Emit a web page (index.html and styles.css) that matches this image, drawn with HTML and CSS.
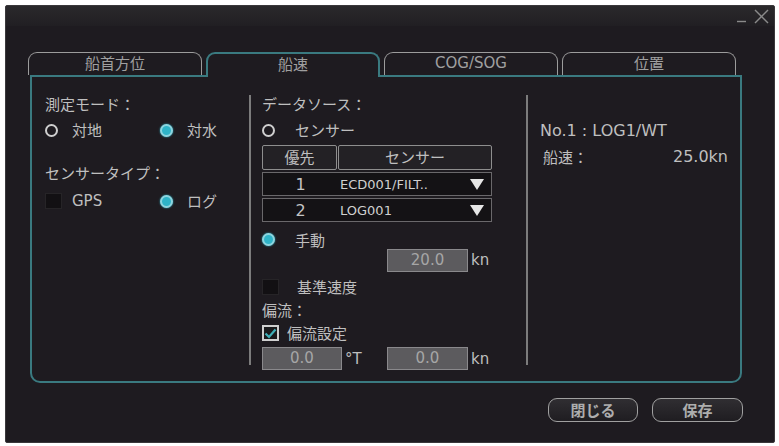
FILE: index.html
```html
<!DOCTYPE html>
<html lang="ja">
<head>
<meta charset="utf-8">
<link rel="stylesheet" href="styles.css">
</head>
<body>
<div class="window">
  <div class="titlebar">
    <svg class="winctl" width="32" height="15" viewBox="0 0 32 15">
      <line x1="0" y1="12.5" x2="9" y2="12.5" stroke="#8a8a8a" stroke-width="1.4"/>
      <line x1="18" y1="1" x2="31" y2="14" stroke="#8a8a8a" stroke-width="1.4"/>
      <line x1="31" y1="1" x2="18" y2="14" stroke="#8a8a8a" stroke-width="1.4"/>
    </svg>
  </div>
  <div class="tabs">
    <div class="tab">船首方位</div>
    <div class="tab active">船速</div>
    <div class="tab latin">COG/SOG</div>
    <div class="tab">位置</div>
  </div>
  <div class="panel">
    <div class="col col1">
      <div class="label">測定モード：</div>
      <div class="opt-row">
        <div class="opt first"><span class="ind"><span class="radio"></span></span>対地</div>
        <div class="opt"><span class="ind"><span class="radio on"></span></span>対水</div>
      </div>
      <div class="label gap-type">センサータイプ：</div>
      <div class="opt-row gap-gps">
        <div class="opt first"><span class="ind"><span class="check dis"></span></span><span class="latin">GPS</span></div>
        <div class="opt"><span class="ind"><span class="radio on"></span></span>ログ</div>
      </div>
    </div>
    <div class="divider"></div>
    <div class="col col2">
      <div class="label">データソース：</div>
      <div class="opt-row">
        <div class="opt"><span class="ind wide"><span class="radio"></span></span>センサー</div>
      </div>
      <div class="table">
        <div class="thead">
          <div class="th prio">優先</div>
          <div class="th sens">センサー</div>
        </div>
        <div class="trow">
          <div class="num">1</div>
          <div class="name">ECD001/FILT..</div>
          <div class="arrow"><svg width="14" height="11" viewBox="0 0 14 11"><polygon points="0,0 14,0 7,11" fill="#e6e6e6"/></svg></div>
        </div>
        <div class="trow">
          <div class="num">2</div>
          <div class="name">LOG001</div>
          <div class="arrow"><svg width="14" height="11" viewBox="0 0 14 11"><polygon points="0,0 14,0 7,11" fill="#e6e6e6"/></svg></div>
        </div>
      </div>
      <div class="opt-row manual">
        <div class="opt"><span class="ind wide"><span class="radio on"></span></span>手動</div>
      </div>
      <div class="field-row speed">
        <div class="field w81">20.0</div><span class="unit">kn</span>
      </div>
      <div class="opt-row ref">
        <div class="opt"><span class="ind ref-ind"><span class="check dis"></span></span>基準速度</div>
      </div>
      <div class="label drift">偏流：</div>
      <div class="opt-row driftset">
        <div class="opt"><span class="ind set-ind"><span class="check on"><svg width="13" height="11" viewBox="0 0 13 11"><polyline points="1.5,5.5 5,9 11.5,1.5" fill="none" stroke="#3fb0b8" stroke-width="2.2"/></svg></span></span>偏流設定</div>
      </div>
      <div class="field-row drift-fields">
        <div class="field w80">0.0</div><span class="unit deg">°T</span>
        <div class="field w81">0.0</div><span class="unit">kn</span>
      </div>
    </div>
    <div class="divider"></div>
    <div class="col col3">
      <div class="info latin">No.1 : LOG1/WT</div>
      <div class="info-row"><span class="info-key">船速：</span><span class="info-val latin">25.0kn</span></div>
    </div>
  </div>
  <div class="buttons">
    <button class="btn close">閉じる</button>
    <button class="btn save">保存</button>
  </div>
</div>
</body>
</html>
```
FILE: styles.css
```css
* { box-sizing: border-box; }
html, body { margin: 0; padding: 0; background: #ffffff; }
body {
  font-family: "Noto Sans CJK JP", "Noto Sans", sans-serif;
  color: #bfbfbf;
}
.latin { font-family: "DejaVu Sans", "Noto Sans CJK JP", sans-serif; }
.window {
  margin: 5px 0 0 5px;
  width: 770px;
  height: 438px;
  background: #1e1b20;
  border: 1px solid #3a383b;
  border-radius: 2px;
}
.titlebar {
  height: 20px;
  background: linear-gradient(#2a292b, #211f23);
  display: flex;
  justify-content: flex-end;
  padding: 3px 5px 0 0;
}
.winctl { display: block; }
.tabs {
  margin: 26px 0 0 22px;
  height: 23px;
  display: flex;
  gap: 4px;
  align-items: flex-start;
}
.tab {
  width: 174px;
  height: 23px;
  border: 1.5px solid #9c9c9c;
  border-bottom: none;
  border-radius: 9px 9px 0 0;
  text-align: center;
  font-size: 15px;
  line-height: 20px;
  color: #a0a0a0;
}
.tab.latin { font-size: 15px; }
.tab.active {
  height: 25px;
  margin-bottom: -2px;
  border: 2px solid #3a7a80;
  border-bottom: none;
  background: #1e1b20;
  position: relative;
  z-index: 1;
  line-height: 19px;
}
.panel {
  margin-left: 24px;
  width: 712px;
  height: 308px;
  border: 2px solid #3a7a80;
  border-radius: 0 0 10px 10px;
  display: flex;
}
.col { display: flex; flex-direction: column; font-size: 15px; }
.col1 { width: 217px; padding: 17px 0 0 13px; }
.col2 { width: 275px; padding: 17px 0 0 11px; }
.col3 { flex: 1; padding: 44px 12px 0 12px; }
.divider {
  width: 2px;
  height: 270px;
  margin-top: 18px;
  background: #7c7c7c;
}
.label { height: 20px; line-height: 20px; white-space: nowrap; }
.opt-row { display: flex; height: 20px; margin-top: 6px; line-height: 20px; }
.opt { display: flex; align-items: center; white-space: nowrap; }
.opt.first { width: 115px; }
.ind { width: 27px; display: flex; align-items: center; }
.ind.wide { width: 33px; }
.ind.ref-ind { width: 35px; }
.ind.set-ind { width: 25px; }
.radio {
  width: 13px;
  height: 13px;
  border-radius: 50%;
  border: 2px solid #cfcfcf;
}
.radio.on {
  background: #2fb4c8;
  border: 2px solid #8ed4de;
  box-shadow: 0 0 2px #2fb4c8;
}
.check {
  width: 17px;
  height: 16px;
  display: flex;
  align-items: center;
  justify-content: center;
}
.check.dis { background: #121013; border: 1px solid #262427; }
.check.on { border: 2px solid #cfcfcf; background: #1a1a1c; }
.gap-type { margin-top: 23px; }
.gap-gps { margin-top: 8px; }
.table { width: 230px; margin-top: 5px; }
.thead { display: flex; height: 25px; gap: 1px; }
.th {
  border: 1.5px solid #8e8e8e;
  border-radius: 2px;
  background: #232125;
  text-align: center;
  line-height: 22px;
  font-size: 15px;
}
.th.prio { width: 75px; }
.th.sens { flex: 1; }
.trow {
  display: flex;
  height: 24px;
  margin-top: 2px;
  background: #141215;
  border: 1px solid #6a686b;
  align-items: center;
}
.num { width: 75px; text-align: center; font-size: 16px; font-family: "DejaVu Sans", sans-serif; color: #c4c4c4; }
.name { flex: 1; padding-left: 2px; font-family: "DejaVu Sans", sans-serif; font-size: 13px; color: #d0d0d0; }
.arrow { width: 21px; display: flex; align-items: center; }
.manual { margin-top: 9px; height: 17px; }
.field-row { display: flex; align-items: center; }
.speed { height: 24px; padding-left: 125px; }
.field {
  height: 23px;
  background: #5c5b5e;
  border: 1px solid #8a898c;
  text-align: center;
  line-height: 21px;
  font-size: 15px;
  color: #a6a6a6;
  font-family: "DejaVu Sans", sans-serif;
}
.w80 { width: 80px; }
.w81 { width: 81px; }
.unit { margin-left: 3px; font-size: 15px; color: #bfbfbf; font-family: "DejaVu Sans", sans-serif; }
.unit.deg { width: 42px; }
.ref { margin-top: 6px; height: 18px; }
.drift { margin-top: 4px; }
.driftset { margin-top: 4px; height: 18px; }
.drift-fields { margin-top: 5px; height: 23px; }
.info { height: 20px; line-height: 20px; font-size: 16px; white-space: nowrap; }
.info-row {
  display: flex;
  justify-content: space-between;
  margin-top: 6px;
  height: 20px;
  line-height: 20px;
  padding-left: 3px;
}
.info-val { font-size: 16px; }
.buttons {
  margin: 15px 0 0 24px;
  width: 713px;
  display: flex;
  justify-content: flex-end;
  gap: 14px;
}
.btn {
  height: 24px;
  border: 1.5px solid #a0a0a0;
  border-radius: 9px;
  background: linear-gradient(#302e32, #1f1d21);
  color: #adadad;
  font-family: "Noto Sans CJK JP", "Noto Sans", sans-serif;
  font-size: 15px;
  font-weight: bold;
  line-height: 20px;
  padding: 0;
}
.btn.close { width: 90px; }
.btn.save { width: 91px; }
```
